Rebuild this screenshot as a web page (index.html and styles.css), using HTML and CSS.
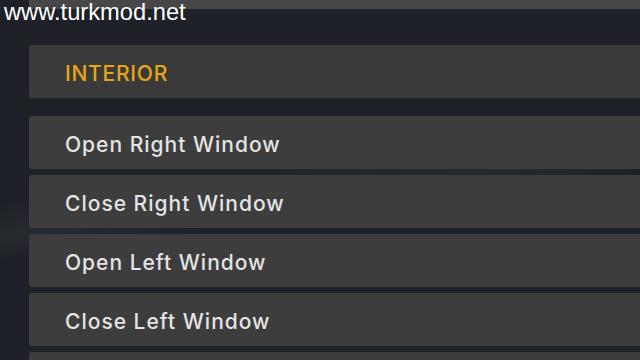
FILE: index.html
```html
<!DOCTYPE html>
<html lang="en">
<head>
<meta charset="utf-8">
<title>Interior</title>
<link rel="stylesheet" href="styles.css">
</head>
<body>
<div class="watermark">www.turkmod.net</div>
<main class="panel">
  <div class="row row-top"></div>
  <div class="row header"><span class="label accent">INTERIOR</span></div>
  <div class="list">
    <div class="row"><span class="label">Open Right Window</span></div>
    <div class="row"><span class="label">Close Right Window</span></div>
    <div class="row"><span class="label">Open Left Window</span></div>
    <div class="row"><span class="label">Close Left Window</span></div>
    <div class="row"></div>
  </div>
</main>
</body>
</html>
```
FILE: styles.css
```css
html, body {
  margin: 0;
  padding: 0;
  width: 640px;
  height: 360px;
  overflow: hidden;
}
body {
  background:
    linear-gradient(172deg, rgba(255,255,255,0) 0%, rgba(255,255,255,0) 45%, rgba(255,255,255,0.04) 53%, rgba(255,255,255,0) 58%),
    #1e2127;
  font-family: Inter, "Noto Sans", sans-serif;
  position: relative;
}
.watermark {
  position: absolute;
  left: 4px;
  top: -1px;
  font-family: "Liberation Sans", Arial, sans-serif;
  font-size: 23.7px;
  color: #ffffff;
  z-index: 2;
}
.panel {
  padding-left: 29px;
  display: flex;
  flex-direction: column;
}
.row {
  height: 53px;
  background: #3d3d3d;
  border-radius: 3px 0 0 3px;
  display: flex;
  align-items: center;
  padding-left: 36px;
  box-sizing: border-box;
}
.row-top {
  height: 9px;
  background: #474747;
  border-radius: 0 0 0 3px;
  margin-bottom: 36px;
}
.header {
  background: #3a3a3a;
  margin-bottom: 18px;
}
.list {
  display: flex;
  flex-direction: column;
  gap: 6px;
}
.label {
  font-size: 21px;
  font-weight: 500;
  color: #e4e4e4;
  padding-top: 3px;
  letter-spacing: 1px;
}
.accent {
  color: #eaa514;
  font-size: 21px;
  letter-spacing: 0.75px;
}
```
